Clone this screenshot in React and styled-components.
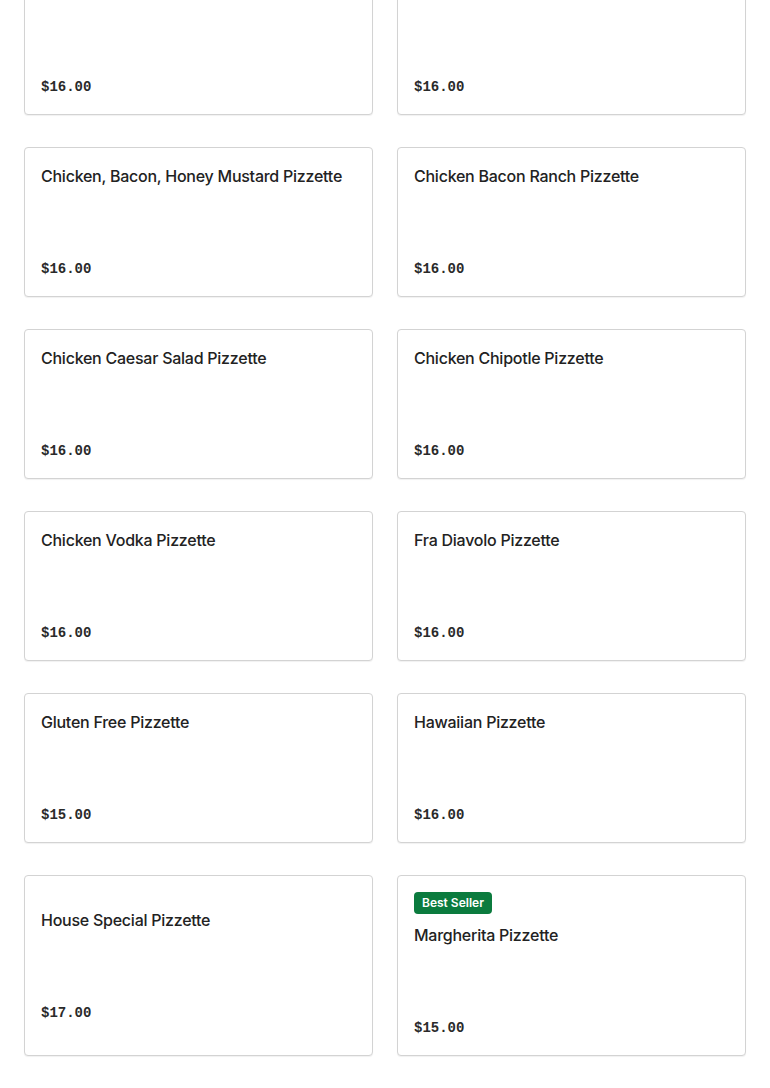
import React from "react";
import styled, { createGlobalStyle } from "styled-components";

const Global = createGlobalStyle`
  body {
    margin: 0;
    background: #fff;
    font-family: "Inter", "Liberation Sans", sans-serif;
    color: #2a2a2a;
  }
`;

const Page = styled.div`
  padding: 0 24px 32px 24px;
  overflow: hidden;
`;

const Grid = styled.div`
  display: grid;
  grid-template-columns: 1fr 1fr;
  column-gap: 24px;
  row-gap: 32px;
  margin-top: -66px;
`;

const Card = styled.div`
  display: flex;
  flex-direction: column;
  justify-content: center;
  border: 1px solid #d3d3d3;
  border-radius: 4px;
  box-shadow: 0 1px 1px rgba(0, 0, 0, 0.06);
  padding: 16px;
  background: #fff;
`;

const Body = styled.div`
  display: flex;
  flex-direction: column;
`;

const Badge = styled.span`
  align-self: flex-start;
  background: #0b7b3e;
  color: #fff;
  font-size: 12px;
  font-weight: 600;
  line-height: 14px;
  padding: 4px 8px;
  border-radius: 4px;
  margin-bottom: 9px;
`;

const Title = styled.h3`
  margin: 0;
  font-size: 16px;
  font-weight: 500;
  line-height: 24px;
  color: #222;
  letter-spacing: -0.25px;
`;

const Price = styled.div`
  margin-top: 70px;
  font-family: "Liberation Mono", "DejaVu Sans Mono", monospace;
  font-size: 14px;
  font-weight: 700;
  line-height: 22px;
  color: #2a2a2a;
`;

const items = [
  { name: "Buffalo Chicken Pizzette", price: "$16.00", badge: "Popular" },
  { name: "Chicken Alfredo Pizzette", price: "$16.00", badge: "Best Seller" },
  { name: "Chicken, Bacon, Honey Mustard Pizzette", price: "$16.00" },
  { name: "Chicken Bacon Ranch Pizzette", price: "$16.00" },
  { name: "Chicken Caesar Salad Pizzette", price: "$16.00" },
  { name: "Chicken Chipotle Pizzette", price: "$16.00" },
  { name: "Chicken Vodka Pizzette", price: "$16.00" },
  { name: "Fra Diavolo Pizzette", price: "$16.00" },
  { name: "Gluten Free Pizzette", price: "$15.00" },
  { name: "Hawaiian Pizzette", price: "$16.00" },
  { name: "House Special Pizzette", price: "$17.00" },
  { name: "Margherita Pizzette", price: "$15.00", badge: "Best Seller" },
];

export default function App() {
  return (
    <Page>
      <Global />
      <Grid>
        {items.map((item) => (
          <Card key={item.name}>
            <Body>
              {item.badge && <Badge>{item.badge}</Badge>}
              <Title>{item.name}</Title>
              <Price>{item.price}</Price>
            </Body>
          </Card>
        ))}
      </Grid>
    </Page>
  );
}
